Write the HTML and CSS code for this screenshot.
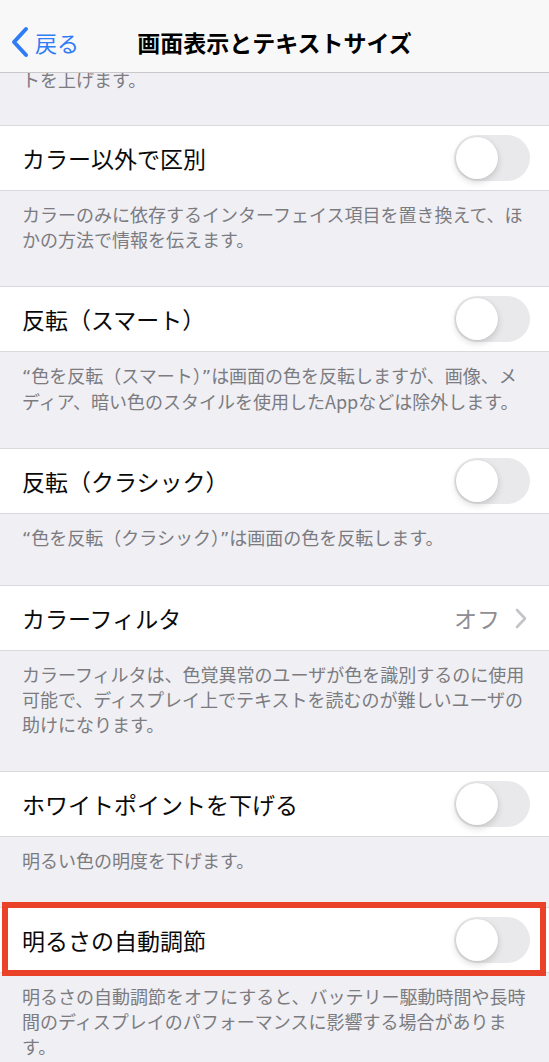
FILE: index.html
```html
<!DOCTYPE html>
<html lang="ja">
<head>
<meta charset="utf-8">
<title>画面表示とテキストサイズ</title>
<link rel="stylesheet" href="styles.css">
</head>
<body>
<header class="nav">
  <a class="back">
    <svg class="back-icon" width="20" height="32" viewBox="0 0 20 32"><path d="M16 3 L4 16 L16 29" fill="none" stroke="#2f7cf6" stroke-width="4" stroke-linecap="round" stroke-linejoin="round"/></svg>
    <span class="back-label">戻る</span>
  </a>
  <h1 class="nav-title">画面表示とテキストサイズ</h1>
</header>
<main class="content">
  <p class="footer footer-clipped">トを上げます。</p>

  <div class="row">
    <span class="row-label">カラー以外で区別</span>
    <span class="switch"><span class="knob"></span></span>
  </div>
  <p class="footer">カラーのみに依存するインターフェイス項目を置き換えて、ほかの方法で情報を伝えます。</p>

  <div class="row">
    <span class="row-label">反転（スマート）</span>
    <span class="switch"><span class="knob"></span></span>
  </div>
  <p class="footer"><span class="q">“</span>色を反転（スマート）<span class="q">”</span>は画面の色を反転しますが、画像、メディア、暗い色のスタイルを使用したAppなどは除外します。</p>

  <div class="row">
    <span class="row-label">反転（クラシック）</span>
    <span class="switch"><span class="knob"></span></span>
  </div>
  <p class="footer"><span class="q">“</span>色を反転（クラシック）<span class="q">”</span>は画面の色を反転します。</p>

  <div class="row">
    <span class="row-label">カラーフィルタ</span>
    <span class="row-value">オフ
      <svg class="chevron" width="12" height="21" viewBox="0 0 12 21"><path d="M2 2 L10 10.5 L2 19" fill="none" stroke="#c4c4c8" stroke-width="2.6" stroke-linecap="round" stroke-linejoin="round"/></svg>
    </span>
  </div>
  <p class="footer">カラーフィルタは、色覚異常のユーザが色を識別するのに使用可能で、ディスプレイ上でテキストを読むのが難しいユーザの助けになります。</p>

  <div class="row">
    <span class="row-label">ホワイトポイントを下げる</span>
    <span class="switch"><span class="knob"></span></span>
  </div>
  <p class="footer">明るい色の明度を下げます。</p>

  <div class="row row-highlighted">
    <span class="row-label">明るさの自動調節</span>
    <span class="switch"><span class="knob"></span></span>
    <span class="highlight"></span>
  </div>
  <p class="footer">明るさの自動調節をオフにすると、バッテリー駆動時間や長時間のディスプレイのパフォーマンスに影響する場合があります。</p>
</main>
</body>
</html>
```

FILE: styles.css
```css
* { box-sizing: border-box; }

html, body {
  margin: 0;
  padding: 0;
}

body {
  background: #efeff4;
  font-family: "Noto Sans CJK JP", "Noto Sans", sans-serif;
  color: #000;
  width: 549px;
  height: 1062px;
  overflow: hidden;
}

.nav {
  height: 73px;
  padding-top: 12px;
  background: #f8f8f8;
  border-bottom: 1px solid #c9c9cc;
  display: grid;
  grid-template-columns: 1fr auto 1fr;
  align-items: center;
}

.back {
  display: flex;
  align-items: center;
  gap: 5px;
  padding-left: 10px;
  color: #2f7cf6;
  font-size: 22px;
  line-height: 1;
}

.back-icon { display: block; }

.nav-title {
  margin: 0;
  font-size: 23px;
  font-weight: 700;
  line-height: 1;
  color: #000;
}

.content {
  overflow: hidden;
}

.footer {
  margin: 0;
  padding: 11px 20px 34px 22px;
  font-size: 18px;
  line-height: 25px;
  color: #7b7b80;
  font-family: "Noto Sans CJK JP", "Liberation Sans", sans-serif;
}

.footer-clipped {
  margin-top: -6px;
  padding-top: 0;
  padding-bottom: 33px;
}

.q {
  font-family: "DejaVu Sans", sans-serif;
}

.row {
  position: relative;
  height: 66px;
  background: #fff;
  border-top: 1px solid #d9d9dd;
  border-bottom: 1px solid #d9d9dd;
  display: flex;
  align-items: center;
  justify-content: space-between;
  padding: 0 19px 0 22px;
}

.row-label {
  font-size: 23px;
  line-height: 1;
  color: #0a0a0a;
}

.switch {
  width: 76px;
  height: 46px;
  border-radius: 23px;
  background: #e9e9eb;
  padding: 2px;
  display: flex;
  align-items: center;
}

.knob {
  width: 42px;
  height: 42px;
  border-radius: 50%;
  background: #fff;
  box-shadow: 0 3px 7px rgba(0, 0, 0, 0.16), 0 0 0 0.5px rgba(0, 0, 0, 0.06);
}

.row-value {
  display: flex;
  align-items: center;
  gap: 15px;
  font-size: 23px;
  line-height: 1;
  color: #8e8e93;
  padding-right: 3px;
}

.chevron { display: block; }

.highlight {
  position: absolute;
  top: -6px;
  bottom: -4px;
  left: 2px;
  right: 3px;
  border: 6px solid #ea4129;
  pointer-events: none;
}
```
